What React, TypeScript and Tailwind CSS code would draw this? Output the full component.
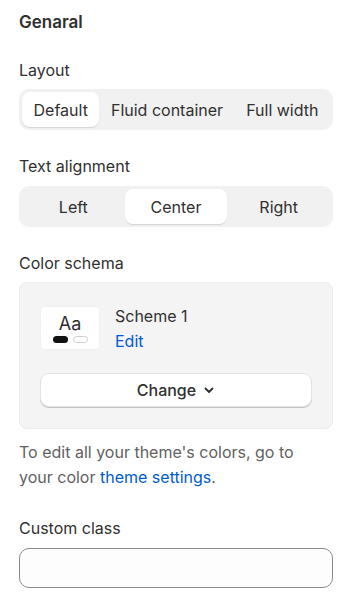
import { useState } from "react";

const layoutOptions = ["Default", "Fluid container", "Full width"];
const alignOptions = ["Left", "Center", "Right"];

function Segmented({
    options,
    value,
    onChange,
    equal,
}: {
    options: string[];
    value: string;
    onChange: (v: string) => void;
    equal?: boolean;
}) {
    return (
        <div className="flex h-[41px] rounded-[10px] bg-[#f1f1f1] p-[3px]">
            {options.map((opt) => (
                <button
                    key={opt}
                    onClick={() => onChange(opt)}
                    className={`${equal ? "flex-1 basis-0" : "flex-auto px-[8px]"} h-[35px] whitespace-nowrap rounded-[8px] text-[16px] text-[#303030] ${
                        opt === value ? "bg-white shadow-[0_1px_1px_rgba(0,0,0,0.12)]" : ""
                    }`}
                >
                    {opt}
                </button>
            ))}
        </div>
    );
}

export default function App() {
    const [layout, setLayout] = useState("Default");
    const [align, setAlign] = useState("Center");

    return (
        <div className="bg-white pl-[19px] pr-[17px] pt-[10px] pb-4 text-[#303030] [font-family:Inter,'Noto_Sans',sans-serif]">
            <h2 className="text-[17px] font-semibold leading-6">Genaral</h2>

            {/* Layout */}
            <div className="mt-6 mb-[7px] text-[16px] leading-6">Layout</div>
            <Segmented options={layoutOptions} value={layout} onChange={setLayout} />

            {/* Text alignment */}
            <div className="mt-6 mb-2 text-[16px] leading-6">Text alignment</div>
            <Segmented options={alignOptions} value={align} onChange={setAlign} equal />

            {/* Color schema */}
            <div className="mt-6 mb-[7px] text-[16px] leading-6">Color schema</div>
            <div className="rounded-[8px] border border-[#ebebeb] bg-[#f4f4f4] px-5 pt-[23px] pb-[21px]">
                <div className="flex h-[44px] items-start gap-[15px]">
                    <div className="flex h-[44px] w-[60px] flex-col items-center justify-center rounded-[5px] border border-[#f0f0f0] bg-white">
                        <span className="text-[18px] leading-5 text-[#303030]">Aa</span>
                        <div className="mt-[2px] flex gap-[5px]">
                            <span className="h-[7px] w-[15px] rounded-full bg-[#111]" />
                            <span className="h-[7px] w-[15px] rounded-full border border-[#cfcfcf] bg-white" />
                        </div>
                    </div>
                    <div className="-mt-[2px] flex flex-col">
                        <span className="text-[16px] leading-[25px]">Scheme 1</span>
                        <a className="text-[16px] leading-[25px] text-[#005bd3]">Edit</a>
                    </div>
                </div>
                <button className="mt-[23px] flex h-[34px] w-full items-center justify-center gap-[7px] rounded-[9px] border border-[#e3e3e3] bg-white text-[16px] font-medium text-[#303030] shadow-[0_1px_0_#c4c4c4]">
                    Change
                    <svg width="12" height="12" viewBox="0 0 12 12" fill="none">
                        <path d="M2.5 4.5 6 8l3.5-3.5" stroke="#303030" strokeWidth="1.8" strokeLinecap="round" strokeLinejoin="round" />
                    </svg>
                </button>
            </div>

            <p className="mt-[11px] max-w-[290px] text-[16px] leading-[25px] text-[#616161]">
                To edit all your theme's colors, go to your color{" "}
                <a className="text-[#005bd3]">theme settings</a>.
            </p>

            {/* Custom class */}
            <div className="mt-[26px] mb-2 text-[16px] leading-6">Custom class</div>
            <input className="h-10 w-full rounded-[10px] border border-[#8a8a8a] bg-[#fdfdfd] px-3 text-[16px] outline-none" />
        </div>
    );
}
